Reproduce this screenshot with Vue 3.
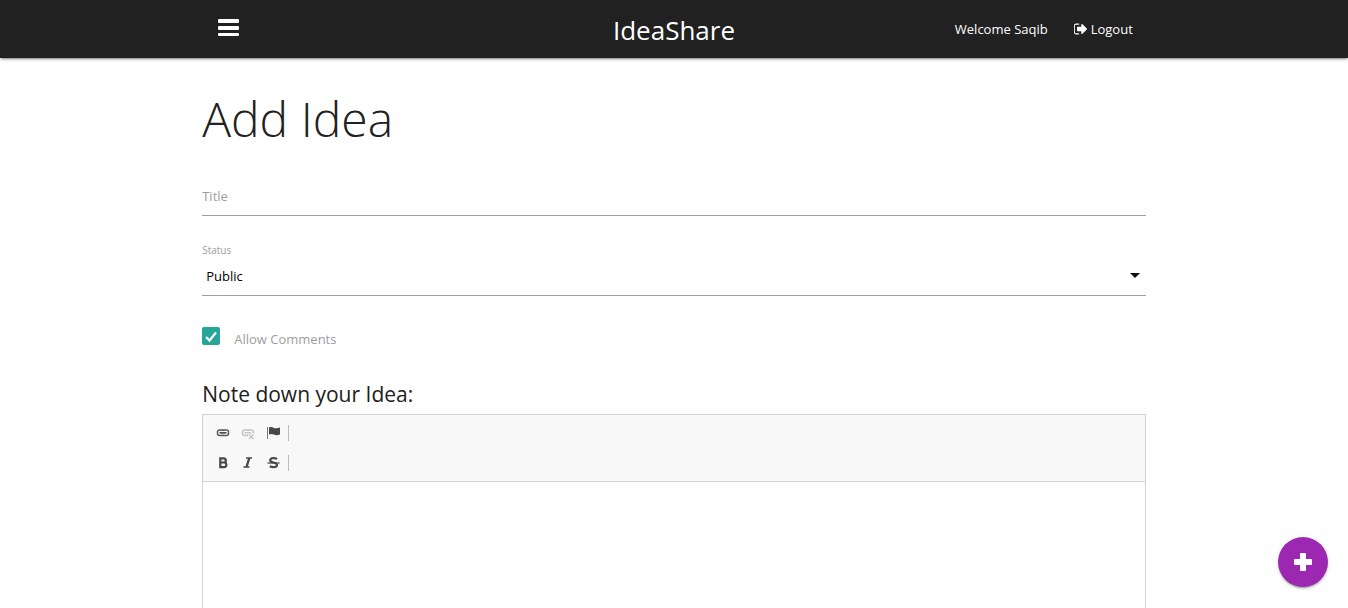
<script setup>
import { ref } from 'vue'

const title = ref('')
const status = ref('public')
const allowComments = ref(true)
const body = ref('')
</script>

<template>
  <div class="page">
    <header class="navbar">
      <div class="container bar">
        <button class="menu" type="button" aria-label="Menu">
          <svg width="21" height="18" viewBox="0 0 21 18" fill="#fff">
            <rect width="21" height="4" rx="1" />
            <rect y="7" width="21" height="4" rx="1" />
            <rect y="14" width="21" height="3" rx="1" />
          </svg>
        </button>
        <a class="brand" href="#">IdeaShare</a>
        <nav class="links">
          <a href="#">Welcome Saqib</a>
          <a href="#">
            <svg width="14" height="14" viewBox="90 128 1664 1536" fill="#fff" aria-hidden="true">
              <path d="M704 1440q0 4 1 20t.5 26.5-3 23.5-10 19.5-20.5 6.5h-320q-119 0-203.5-84.5t-84.5-203.5v-704q0-119 84.5-203.5t203.5-84.5h320q13 0 22.5 9.5t9.5 22.5q0 4 1 20t.5 26.5-3 23.5-10 19.5-20.5 6.5h-320q-66 0-113 47t-47 113v704q0 66 47 113t113 47h312l11.5 1 11.5 3 8 5.5 7 9 2 13.5zm928-544q0 26-19 45l-544 544q-19 19-45 19t-45-19-19-45v-288h-448q-26 0-45-19t-19-45v-384q0-26 19-45t45-19h448v-288q0-26 19-45t45-19 45 19l544 544q19 19 19 45z" />
            </svg>
            Logout
          </a>
        </nav>
      </div>
    </header>

    <main class="container content">
      <h1>Add Idea</h1>
      <form class="form" @submit.prevent>
        <div class="field">
          <input id="title" v-model="title" type="text" placeholder=" " />
          <label class="float" for="title">Title</label>
        </div>

        <div class="field select-field">
          <label class="small" for="status">Status</label>
          <select id="status" v-model="status">
            <option value="public">Public</option>
            <option value="private">Private</option>
            <option value="unpublished">Unpublished</option>
          </select>
          <svg class="caret" width="10" height="5" viewBox="0 0 10 5" aria-hidden="true">
            <path d="M0 0h10L5 5z" fill="#111" />
          </svg>
        </div>

        <div class="check">
          <input id="comments" v-model="allowComments" type="checkbox" />
          <svg class="tick" width="18" height="18" viewBox="0 0 18 18" aria-hidden="true">
            <path d="M4 10L7.500 13.500L14 5.500" fill="none" stroke="#fff" stroke-width="2.200" />
          </svg>
          <label for="comments">Allow Comments</label>
        </div>

        <h2><label for="body">Note down your Idea:</label></h2>
        <div class="editor">
          <div class="toolbar">
            <div class="row">
              <button type="button" aria-label="Link">
                <svg width="16" height="16" viewBox="0 0 16 16" fill="none" stroke="#5c5c5c">
                  <path d="M7.300 6V5H4.500A2 2 0 0 0 2.500 7V8.500A2 2 0 0 0 4.500 10.500H7.300V9.500M8.700 6V5H11.500A2 2 0 0 1 13.500 7V8.500A2 2 0 0 1 11.500 10.500H8.700V9.500" stroke-width="1.500" />
                  <path d="M4.500 7.800h7" stroke="#484848" stroke-width="1.600" />
                </svg>
              </button>
              <button type="button" aria-label="Unlink" disabled>
                <svg width="16" height="16" viewBox="0 0 16 16" fill="none" stroke="#c4c4c4">
                  <path d="M7.300 6V5H4.500A2 2 0 0 0 2.500 7V8.500A2 2 0 0 0 4.500 10.500H7.300V9.500M8.700 6V5H11.500A2 2 0 0 1 13.500 7V8.500" stroke-width="1.500" />
                  <path d="M4.500 7.800h7" stroke-width="1.400" />
                  <path d="M9 9.500l4.500 4.500M13.500 9.500L9 14" stroke-width="1.400" />
                </svg>
              </button>
              <button type="button" aria-label="Anchor">
                <svg width="16" height="16" viewBox="0 0 16 16">
                  <path d="M2.500 2v12" stroke="#777" />
                  <path d="M4 2.500C6 1.500 7.500 2.300 9 3C11 3.800 12.500 3 15 2.500V9.500C12 10.500 10.500 10.300 9 9.600C7 8.700 5.500 8.700 4 9.500z" fill="#484848" />
                </svg>
              </button>
              <span class="divider"></span>
            </div>
            <div class="row">
              <button type="button" aria-label="Bold">
                <svg width="16" height="16" viewBox="0 0 16 16" fill="none" stroke="#484848" stroke-width="2.200">
                  <path d="M5.300 3.300h3.200a2.200 2 0 0 1 0 4.200H5.300zM5.300 7.500h3.700a2.400 2.300 0 0 1 0 4.600H5.300z" />
                </svg>
              </button>
              <button type="button" aria-label="Italic">
                <svg width="16" height="16" viewBox="0 0 16 16" fill="none" stroke="#484848">
                  <path d="M6 3h6M3.500 12h6" stroke-width="1.500" />
                  <path d="M9.300 3l-2.800 9" stroke-width="2.300" />
                </svg>
              </button>
              <button type="button" aria-label="Strikethrough">
                <svg width="16" height="16" viewBox="0 0 16 16" fill="none" stroke="#484848">
                  <path d="M12 4Q10.300 3 8.500 3Q5.200 3.100 5.200 5.200Q5.200 6.700 8.500 7.500Q12 8.300 12 10Q11.800 12.200 8.500 12.200Q6.300 12.200 4.800 11.300" stroke-width="2.200" />
                  <path d="M2.500 8h12" stroke-width="1.300" />
                </svg>
              </button>
              <span class="divider"></span>
            </div>
          </div>
          <textarea id="body" v-model="body"></textarea>
        </div>
      </form>
    </main>

    <button class="fab" type="button" aria-label="Add idea">
      <svg width="18" height="18" viewBox="0 0 18 18" fill="#fff">
        <rect x="6" width="6" height="18" rx="1" />
        <rect y="6" width="18" height="6" rx="1" />
      </svg>
    </button>
  </div>
</template>

<style>
body {
  margin: 0;
  background: #fff;
}
</style>

<style scoped>
.page {
  height: 100vh;
  display: flex;
  flex-direction: column;
  overflow: hidden;
  font-family: "Open Sans", "Noto Sans", sans-serif;
  font-size: 13px;
  color: #212121;
}
.page * {
  box-sizing: border-box;
}
button,
input,
select,
textarea {
  font: inherit;
  margin: 0;
  border: 0;
  padding: 0;
  background: none;
  outline: none;
}
svg {
  display: block;
}
.container {
  width: 70%;
  margin: 0 auto;
}
.navbar {
  flex: none;
  background: #212121;
  box-shadow: 0 2px 2px rgba(0, 0, 0, 0.14), 0 1px 5px rgba(0, 0, 0, 0.12), 0 3px 1px -2px rgba(0, 0, 0, 0.2);
}
.bar {
  display: grid;
  grid-template-columns: 1fr auto 1fr;
  align-items: center;
  height: 58px;
}
.menu {
  justify-self: start;
  padding: 0 16px 4px;
}
.brand {
  font-size: 26px;
  line-height: 60px;
  color: #fff;
  text-decoration: none;
}
.links {
  display: flex;
  justify-content: flex-end;
  gap: 26px;
  padding: 0 13px 2px 0;
}
.links a {
  display: flex;
  align-items: center;
  gap: 3px;
  color: #fff;
  text-decoration: none;
}
.content {
  flex: 1;
  display: flex;
  flex-direction: column;
  min-height: 0;
}
h1 {
  margin: 33px 0 27px;
  font-size: 48px;
  line-height: 56px;
  font-weight: 300;
}
.form {
  flex: 1;
  display: flex;
  flex-direction: column;
}
.field {
  position: relative;
}
.field input,
.field select {
  display: block;
  width: 100%;
  height: 42px;
  border-bottom: 1px solid #9e9e9e;
}
label {
  color: #9e9e9e;
}
.float {
  position: absolute;
  left: 0;
  top: 12px;
  line-height: 20px;
}
.field input:focus + .float,
.field input:not(:placeholder-shown) + .float {
  top: -8px;
  font-size: 11px;
}
.select-field {
  padding-top: 26px;
}
.small {
  display: block;
  height: 12px;
  font-size: 10px;
  line-height: 16px;
}
.field select {
  appearance: none;
  padding: 2px 24px 0 4px;
  color: #000;
}
.caret {
  position: absolute;
  right: 6px;
  bottom: 18px;
  pointer-events: none;
}
.check {
  display: flex;
  align-items: flex-start;
  position: relative;
  margin-top: 31px;
  gap: 14px;
}
.check input {
  appearance: none;
  width: 18px;
  height: 18px;
  border: 2px solid #5a5a5a;
  border-radius: 2px;
}
.check input:checked {
  background: #26a69a;
  border-color: #26a69a;
}
.tick {
  position: absolute;
  left: 0;
  top: 0;
  pointer-events: none;
}
.check label {
  line-height: 25px;
}
h2 {
  margin: 26px 0 4px;
  font-size: 21px;
  line-height: 32px;
  font-weight: 400;
}
h2 label {
  color: inherit;
}
.editor {
  flex: 1;
  display: flex;
  flex-direction: column;
  border: 1px solid #d1d1d1;
  border-bottom: 0;
}
.toolbar {
  padding: 3px 8px;
  background: #f8f8f8;
  border-bottom: 1px solid #d1d1d1;
}
.row {
  display: flex;
  align-items: center;
  height: 30px;
}
.row button {
  width: 25px;
  padding: 0 4px;
}
.divider {
  width: 1px;
  height: 16px;
  margin-left: 2px;
  background: #bcbcbc;
}
textarea {
  flex: 1;
  padding: 20px;
  resize: none;
  background: #fff;
}
.fab {
  position: fixed;
  right: 20px;
  bottom: 21px;
  display: grid;
  place-items: center;
  width: 50px;
  height: 50px;
  border-radius: 50%;
  background: #9c27b0;
  box-shadow: 0 2px 2px rgba(0, 0, 0, 0.14), 0 1px 5px rgba(0, 0, 0, 0.12), 0 3px 1px -2px rgba(0, 0, 0, 0.2);
}
</style>
